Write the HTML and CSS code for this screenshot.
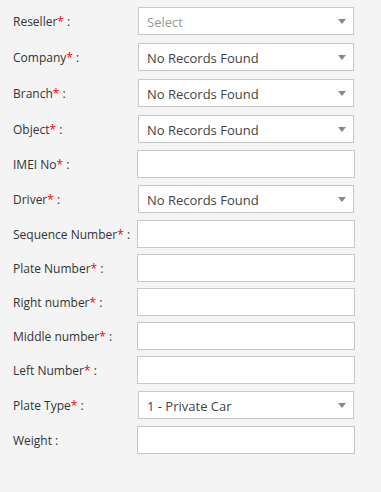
FILE: index.html
```html
<!DOCTYPE html>
<html lang="en">
<head>
    <meta charset="UTF-8">
    <meta name="viewport" content="width=device-width, initial-scale=1.0">
    <title>Add Object</title>
    <link rel="stylesheet" href="styles.css">
</head>
<body>
    <form class="form">
        <div class="row">
            <label>Reseller<span class="req">*</span> :</label>
            <div class="select-wrap"><div class="select placeholder"><span>Select</span><i class="arrow"></i></div></div>
        </div>
        <div class="row">
            <label>Company<span class="req">*</span> :</label>
            <div class="select-wrap"><div class="select"><span>No Records Found</span><i class="arrow"></i></div></div>
        </div>
        <div class="row">
            <label>Branch<span class="req">*</span> :</label>
            <div class="select-wrap"><div class="select"><span>No Records Found</span><i class="arrow"></i></div></div>
        </div>
        <div class="row">
            <label>Object<span class="req">*</span> :</label>
            <div class="select-wrap"><div class="select"><span>No Records Found</span><i class="arrow"></i></div></div>
        </div>
        <div class="row">
            <label>IMEI No<span class="req">*</span> :</label>
            <input type="text" class="input">
        </div>
        <div class="row">
            <label>Driver<span class="req">*</span> :</label>
            <div class="select-wrap"><div class="select"><span>No Records Found</span><i class="arrow"></i></div></div>
        </div>
        <div class="row">
            <label>Sequence Number<span class="req">*</span> :</label>
            <input type="text" class="input">
        </div>
        <div class="row">
            <label>Plate Number<span class="req">*</span> :</label>
            <input type="text" class="input">
        </div>
        <div class="row">
            <label>Right number<span class="req">*</span> :</label>
            <input type="text" class="input">
        </div>
        <div class="row">
            <label>Middle number<span class="req">*</span> :</label>
            <input type="text" class="input">
        </div>
        <div class="row">
            <label>Left Number<span class="req">*</span> :</label>
            <input type="text" class="input">
        </div>
        <div class="row">
            <label>Plate Type<span class="req">*</span> :</label>
            <div class="select-wrap"><div class="select"><span>1 - Private Car</span><i class="arrow"></i></div></div>
        </div>
        <div class="row">
            <label>Weight :</label>
            <input type="text" class="input">
        </div>
    </form>
</body>
</html>
```

FILE: styles.css
```css
body {
    background-color: #f4f4f4;
    color: #333333;
    font-family: 'Open Sans', 'Liberation Sans', sans-serif;
    margin: 0;
    padding: 6px 0 0 13px;
}

.form {
    display: flex;
    flex-direction: column;
    gap: 6px;
}

.row {
    display: grid;
    grid-template-columns: 124px 218px;
    align-items: center;
}

.row label {
    font-size: 12px;
    color: #333333;
    padding-top: 1px;
}

.req {
    color: #ff0000;
}

.input {
    box-sizing: border-box;
    width: 218px;
    height: 28px;
    margin: 0;
    border: 1px solid #c8c8c8;
    background-color: #ffffff;
    font-family: inherit;
    font-size: 13px;
    padding: 0 8px;
    outline: none;
}

.select-wrap {
    padding: 1px;
}

.select {
    box-sizing: border-box;
    height: 28px;
    border: 1px solid #c8c8c8;
    background-color: #ffffff;
    display: flex;
    align-items: center;
    justify-content: space-between;
    padding: 1px 7px 0 8px;
    font-size: 13px;
    color: #444444;
}

.select.placeholder {
    color: #999999;
}

.arrow {
    width: 0;
    height: 0;
    border-left: 4px solid transparent;
    border-right: 4px solid transparent;
    border-top: 5px solid #888888;
}
```
